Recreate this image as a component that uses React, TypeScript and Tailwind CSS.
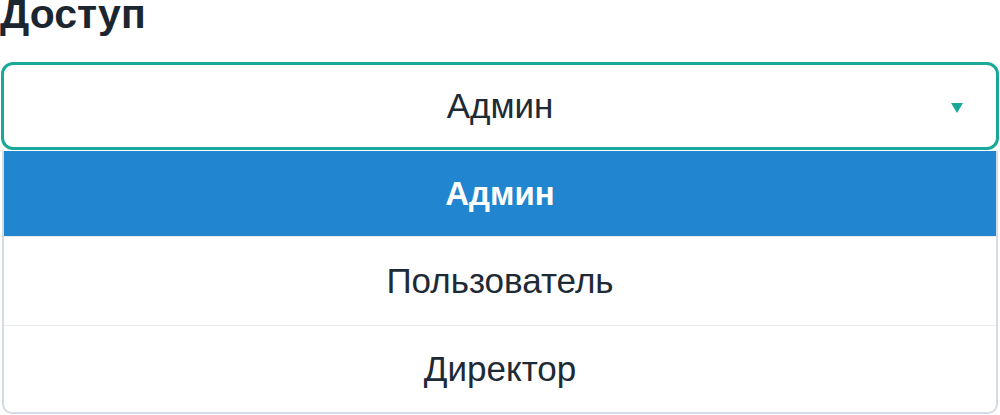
const options = ["Админ", "Пользователь", "Директор"];

export default function App() {
  const selected = "Админ";

  return (
    <div
      className="w-[1000px] h-[415px] bg-white overflow-hidden"
      style={{ fontFamily: '"Liberation Sans", Arial, sans-serif' }}
    >
      <h2 className="text-[41px] leading-[40px] font-bold text-[#1b2631] -mt-[6px] mb-[28px]">
        Доступ
      </h2>

      <div className="mx-[1px]">
        <div className="relative h-[88px] border-[3px] border-[#1aa898] rounded-[12px] flex items-center justify-center">
          <span className="text-[35px] text-[#1e2a36]">{selected}</span>
          <span className="absolute right-[33px] top-[38px] w-0 h-0 border-l-[6px] border-r-[6px] border-t-[10px] border-l-transparent border-r-transparent border-t-[#1aa898]" />
        </div>

        <div className="mt-[1px] mx-[1px] border-x-2 border-b-2 border-[#d4dbe4] rounded-b-[10px] overflow-hidden">
          {options.map((opt, i) =>
            opt === selected ? (
              <div
                key={opt}
                className="h-[85px] flex items-center justify-center bg-[#2185d0] text-white font-bold text-[33px]"
              >
                {opt}
              </div>
            ) : (
              <div
                key={opt}
                className={
                  (i === 1 ? "h-[89px] " : "h-[87px] ") +
                  "flex items-center justify-center text-[35px] text-[#1e2a36] border-t border-[#e6ebef]"
                }
              >
                {opt}
              </div>
            )
          )}
        </div>
      </div>
    </div>
  );
}
